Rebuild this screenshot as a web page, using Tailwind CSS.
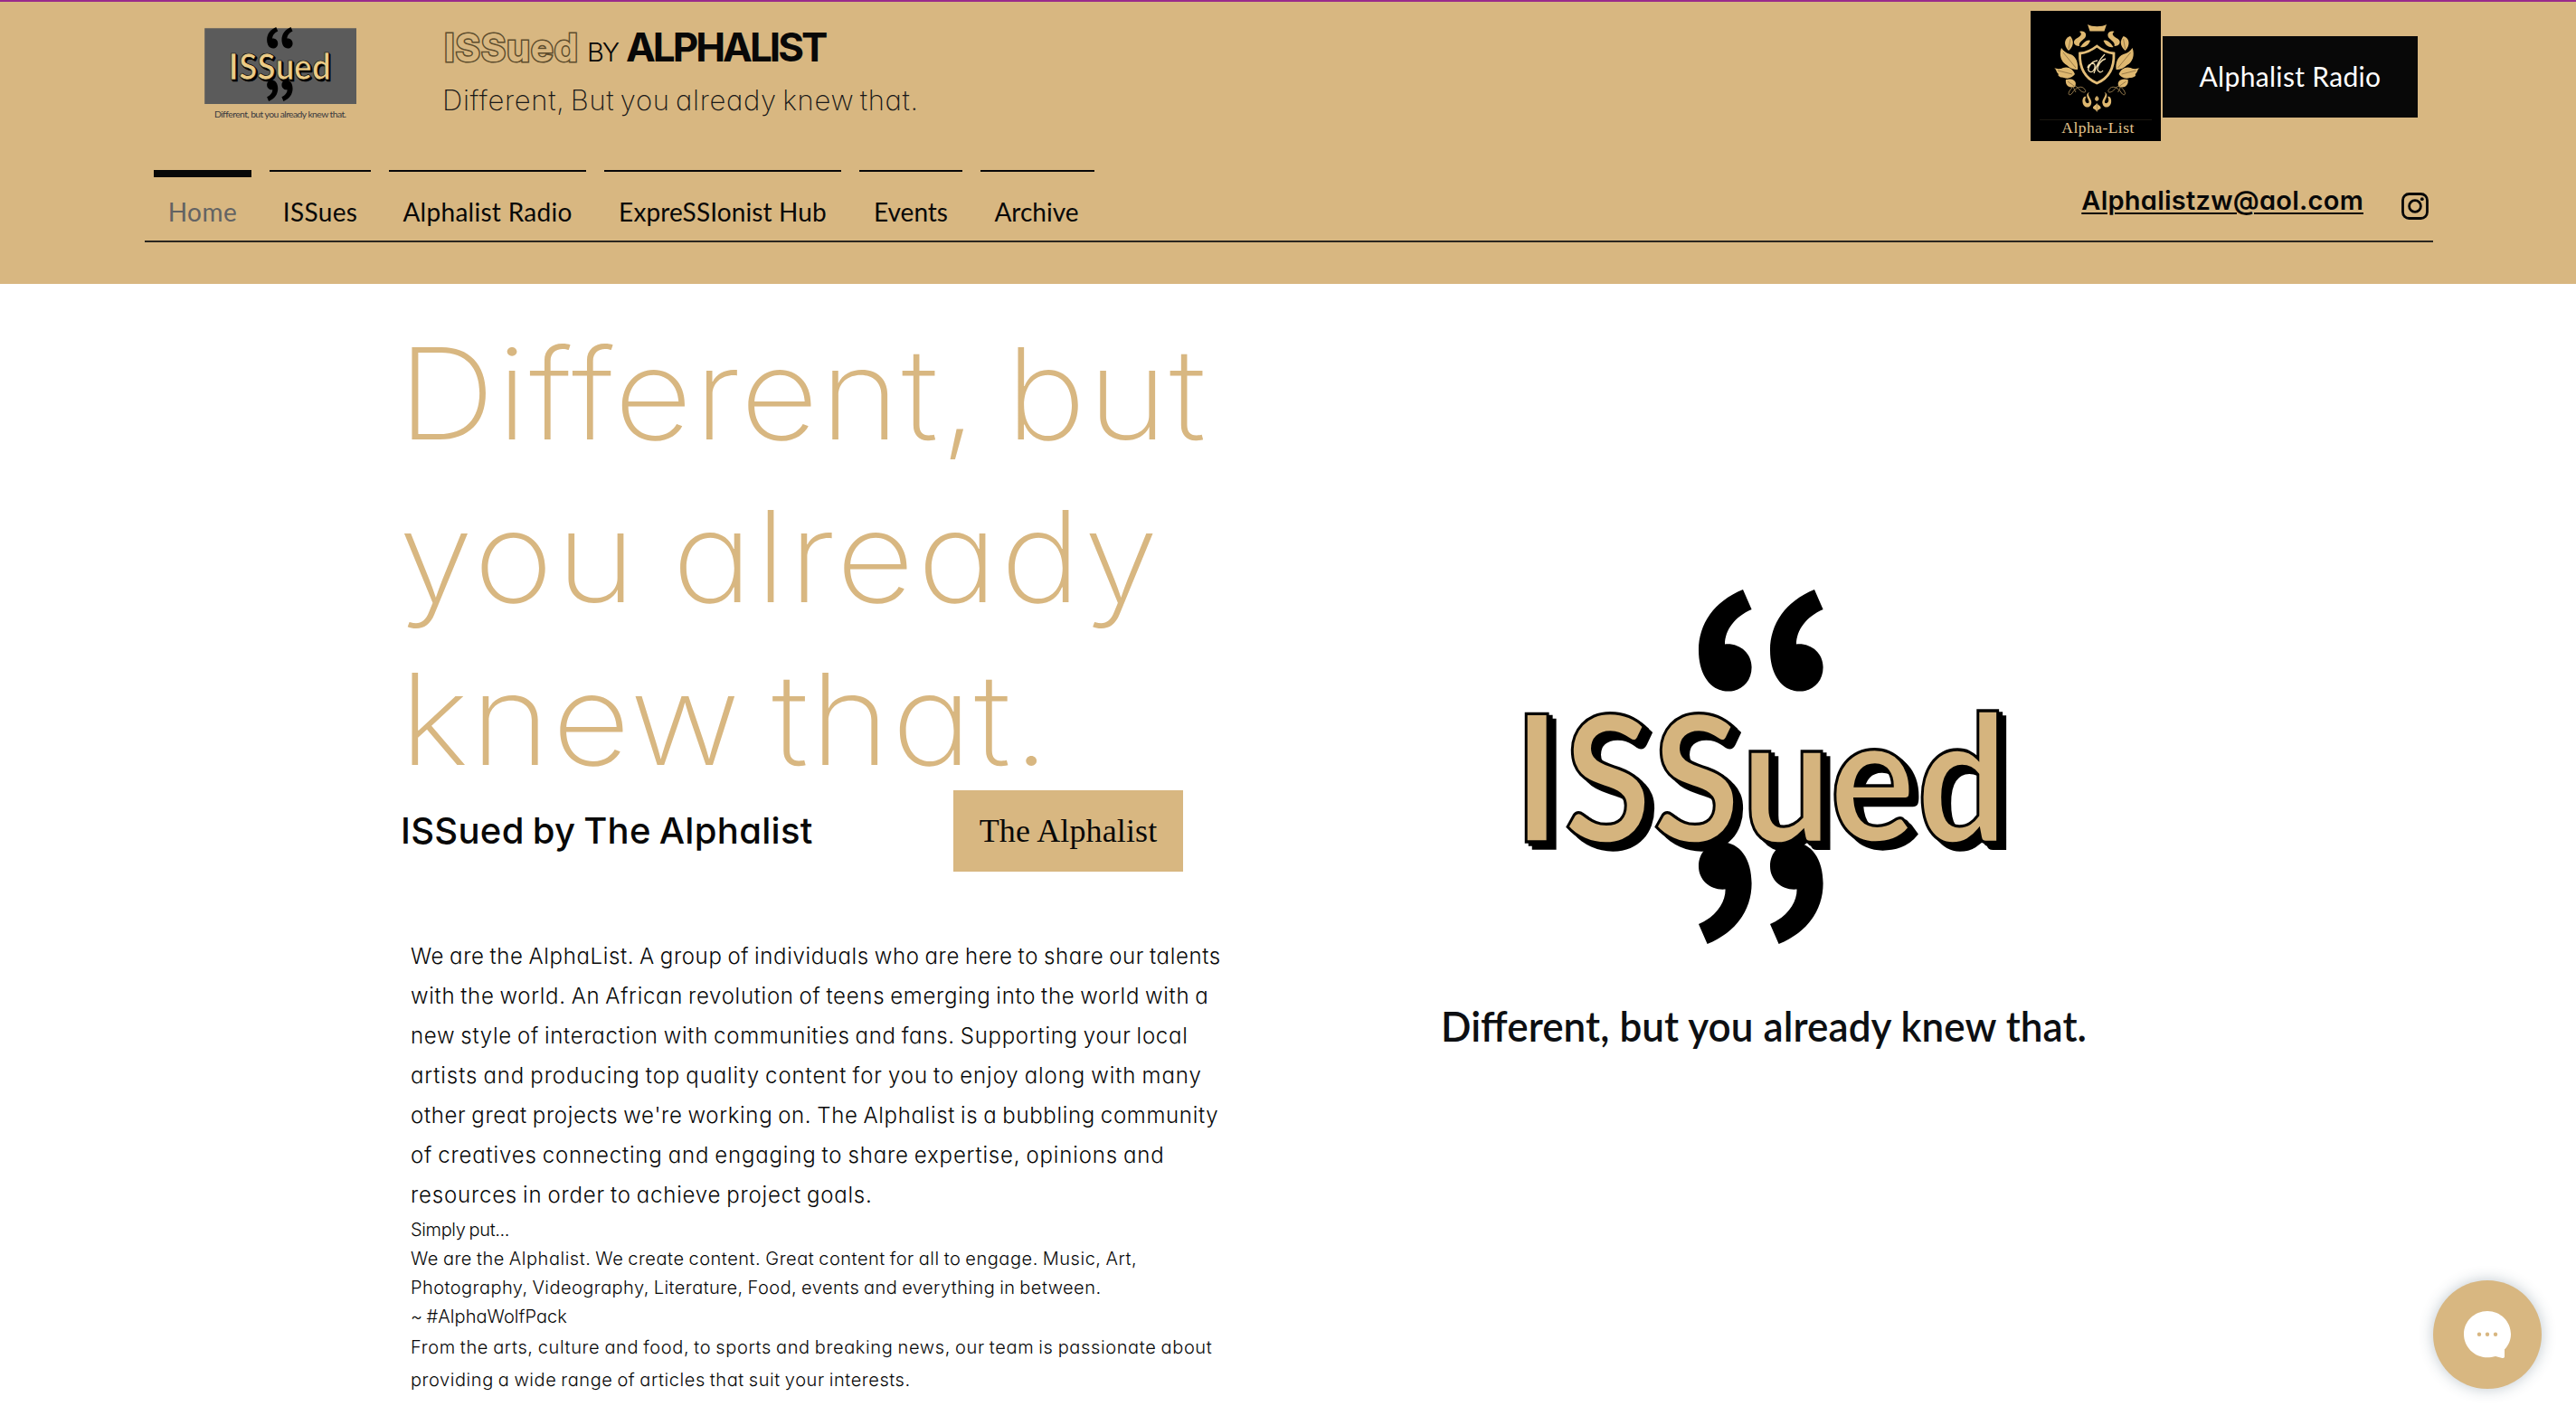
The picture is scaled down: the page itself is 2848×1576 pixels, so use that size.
<!DOCTYPE html>
<html lang="en">
<head>
<meta charset="utf-8">
<title>ISSued by Alphalist</title>
<script src="https://cdn.jsdelivr.net/npm/@tailwindcss/browser@4"></script>
</head>
<body class="relative h-[1576px] w-[2848px] overflow-hidden bg-white font-['Inter',sans-serif] text-[#080808] [font-feature-settings:'cv11']">

<!-- Shared artwork -->
<svg class="absolute size-0">
  <defs>
    <path id="quote" d="M49 0 L58.6 22 C40 30 29 45 29 60.5 C45 59 58.6 70 58.6 86 C58.6 102 47 112.6 33 112.6 C13 112.6 0 94 0 67 C0 38 17 13 49 0Z"/>
    <g id="wordmark" font-family="Lato, sans-serif" font-weight="700" font-size="177" stroke-linejoin="miter">
      <use href="#quote" x="191" y="0"/><use href="#quote" x="270" y="0"/>
      <use href="#quote" transform="translate(249.6 392) rotate(180)"/><use href="#quote" transform="translate(328.6 392) rotate(180)"/>
      <g fill="#000" stroke="#000" stroke-width="3">
        <text x="-6 50 148 246 344 440" transform="translate(0 286) scale(1 1.1)">ISSued</text>
        <text x="-10 46 144 242 340 436" transform="translate(0 282) scale(1 1.1)">ISSued</text>
      </g>
      <text x="-14 42 140 238 336 432" transform="translate(0 279) scale(1 1.1)" fill="currentColor" stroke="#000" stroke-width="3">ISSued</text>
    </g>
    <g id="crest-half">
      <path d="M44 28 C37 30 36 38 42 44 C48 39 48 33 44 28Z"/>
      <path d="M34 41 C31 49 34 57 40 60 C43 63 47 65 52 65 C53 57 50 50 44 48 C40 47 37 45 34 41Z"/>
      <path d="M26 63 C29 65 28 68 31 70 C29 72 33 74 37 74 C42 76 47 73 49 70 C47 64 41 61 36 63 C32 65 29 64 26 63Z"/>
      <path d="M39 76 C38 82 42 86 49 84 C52 78 47 74 39 76Z"/>
      <path d="M54 23 C60 21 63 26 60 30 C56 34 53 35 54 39 C48 39 46 34 50 31 C55 28 58 26 54 23Z"/>
      <path d="M66 33 C62 31 58 36 55 40 C60 41 64 38 66 33Z"/>
      <path d="M46 85 C39 92 43 95 46 91 C50 84 57 82 60 87 C63 91 57 91 54 87 C50 82 44 80 50 90" fill="none" stroke="#b3935c" stroke-width=".8"/>
      <path d="M65 90 C61 93 69 98 67 103 C65 109 58 107 57.500 101 C57 97 59 94 61.500 95 C59 99 61 103 64 102 C67 100 58 93 65 90Z"/>
      <path d="M73.300 94 C70 97 71 99 73.300 100Z M73.300 102 C71 106 69 104 69 108 C71 109 72 109 73.300 112Z"/>
    </g>
  </defs>
</svg>

<header class="h-[314px] border-t-2 border-[#992b8c] bg-[#d8b781]">
  <div class="flex h-[186px] items-start pl-[225px]">
    <svg class="mt-[18px] h-[116px] w-[170px] shrink-0 text-[#eccb86]" viewBox="225 20 170 116">
      <rect x="225.8" y="30.8" width="168.6" height="84.6" fill="#5b5b5b" stroke="#e3c187" stroke-width=".8"/>
      <use href="#wordmark" transform="translate(255.7 30) scale(.2065 .209)"/>
      <text x="237" y="130" font-family="Lato, sans-serif" font-size="10.4" fill="#3a3a40" textLength="146">Different, but you already knew that.</text>
    </svg>
    <div class="ml-[96px] w-[600px] whitespace-nowrap">
      <div class="mt-[21px] flex items-baseline text-[44px] leading-[59px]">
        <span class="w-[158px] text-[42px] font-bold tracking-[0.7px] text-[#d8b781] [-webkit-text-stroke:3px_#5c4c2d] [paint-order:stroke]">ISSued</span>
        <span class="w-[43px] text-[29px] font-light tracking-[-2px]">BY</span>
        <span class="font-bold tracking-[-3px]">ALPHALIST</span>
      </div>
      <p class="-mt-[3px] -ml-[2px] text-[31px] leading-[54px] font-extralight tracking-[0.68px] text-[#181818] [word-spacing:-3px]">Different, But you already knew that.</p>
    </div>
    <svg class="mt-[10px] ml-[1154px] h-36 w-36 shrink-0" viewBox="0 0 144 144">
      <rect width="144" height="144" fill="#000"/>
      <g fill="#dfb870">
        <path d="M63 15 C68 18 79 18 84 15 L81.500 22.500 H65.500Z"/>
        <use href="#crest-half"/>
        <use href="#crest-half" transform="translate(146.600 0) scale(-1 1)"/>
      </g>
      <g fill="none" stroke="#7d6136" stroke-width=".7">
        <path d="M44 31 L42 42 M36 46 L50 63 M30 66 L46 70 M41 78 L48 83 M102.600 31 L104.600 42 M110.600 46 L96.600 63 M116.600 66 L100.600 70 M105.600 78 L98.600 83"/>
      </g>
      <path d="M73.300 39 C67 44 61 46.500 54.500 47 C54 63 59 74 73.300 80 C87.600 74 92.600 63 92 47 C85.600 46.500 79.600 44 73.300 39Z" fill="#000" stroke="#e3bd78" stroke-width="2.800"/>
      <path d="M63 63 C64 58 70 57 71 60 C72 65 68 69 65 67 C62 65 66 56 74 55 M82 48 C76 54 73 60 70 69 M83 53 C78 54 74 60 74 65 C75 68 78 69 80 66" fill="none" stroke="#f0dcae" stroke-width="1.300"/>
      <path d="M10 120.500 H134" stroke="#1b1710" stroke-width="1"/>
      <text x="34.300" y="135.300" font-family="Liberation Serif, serif" font-size="17.500" fill="#e2c48d" textLength="80">Alpha-List</text>
    </svg>
    <div class="mt-[38px] ml-[2px] flex h-[90px] w-[282px] items-center justify-center bg-[#080808] pb-[2px] font-['Lato',sans-serif] text-[30px] tracking-[0.33px] text-white">Alphalist Radio</div>
  </div>

  <div class="mr-[158px] ml-[160px] flex h-20 justify-between border-b-2 border-[#2b2720] pl-[10px]">
    <nav class="flex gap-5 text-center font-['Lato',sans-serif] text-[28px] whitespace-nowrap">
      <a class="w-[108px]"><span class="mb-[5px] block h-2 bg-[#080808]"></span><span class="block leading-[66px] tracking-[0.5px] text-[#636363]">Home</span></a>
      <a class="w-[112px]"><span class="mb-[11px] block h-[2px] bg-[#080808]"></span><span class="block leading-[66px] tracking-[0.33px]">ISSues</span></a>
      <a class="w-[218px]"><span class="mb-[11px] block h-[2px] bg-[#080808]"></span><span class="block leading-[66px] tracking-[0.28px]">Alphalist Radio</span></a>
      <a class="w-[262px]"><span class="mb-[11px] block h-[2px] bg-[#080808]"></span><span class="block leading-[66px] tracking-[0.13px]">ExpreSSIonist Hub</span></a>
      <a class="w-[114px]"><span class="mb-[11px] block h-[2px] bg-[#080808]"></span><span class="block leading-[66px]">Events</span></a>
      <a class="w-[126px]"><span class="mb-[11px] block h-[2px] bg-[#080808]"></span><span class="-ml-[2px] block leading-[66px]">Archive</span></a>
    </nav>
    <div class="flex items-start gap-[42px] pr-[5px]">
      <a class="text-[29px] leading-[68px] font-semibold tracking-[0.25px] underline decoration-2 underline-offset-[3px]">Alphalistzw@aol.com</a>
      <svg class="mt-[25px] size-[30px]" viewBox="0 0 30 30" fill="none" stroke="#080808" stroke-width="2.800">
        <rect x="1.500" y="1.500" width="27" height="27" rx="7"/>
        <circle cx="15" cy="15" r="6.400"/>
        <circle cx="22.800" cy="7.200" r="1.900" fill="#080808" stroke="none"/>
      </svg>
    </div>
  </div>
</header>

<main class="flex pt-[31px] pl-[443px]">
  <section class="w-[1117px] whitespace-nowrap">
    <h1 class="origin-left scale-x-107 text-[140px] leading-[180px] font-extralight text-[#d8b781]">
      <span class="-ml-[3px] block tracking-[2px] [word-spacing:-14px]">Different, but</span>
      <span class="-ml-[2px] block tracking-[3.2px] [word-spacing:-8px]">you already</span>
      <span class="-ml-[1px] block tracking-[2.2px] [word-spacing:-11px]">knew that.</span>
    </h1>
    <div class="-mt-[11px] flex h-[90px] w-[865px] items-center justify-between">
      <h2 class="text-[40px] leading-[86px] font-medium tracking-[0.3px] [word-spacing:-2px]">ISSued by The Alphalist</h2>
      <a class="flex h-[90px] w-[254px] items-center justify-center bg-[#d8b781] font-['Liberation_Serif',serif] text-[36px] tracking-[0.13px]">The Alphalist</a>
    </div>
    <p class="mt-[72px] ml-[11px] text-[24px] leading-[44px] font-light [word-spacing:-1.5px]">
      <span class="block tracking-[0.643px]">We are the AlphaList. A group of individuals who are here to share our talents</span>
      <span class="block tracking-[0.7px]">with the world. An African revolution of teens emerging into the world with a</span>
      <span class="block tracking-[0.73px]">new style of interaction with communities and fans. Supporting your local</span>
      <span class="block tracking-[0.91px]">artists and producing top quality content for you to enjoy along with many</span>
      <span class="block tracking-[0.671px]">other great projects we're working on. The Alphalist is a bubbling community</span>
      <span class="block tracking-[0.83px]">of creatives connecting and engaging to share expertise, opinions and</span>
      <span class="block tracking-[0.8px]">resources in order to achieve project goals.</span>
    </p>
    <p class="ml-[11px] text-[20px] leading-[32px] font-light [word-spacing:-1.2px]">
      <span class="block tracking-[-0.36px]">Simply put...</span>
      <span class="block tracking-[0.53px]">We are the Alphalist. We create content. Great content for all to engage. Music, Art,</span>
      <span class="block tracking-[0.45px]">Photography, Videography, Literature, Food, events and everything in between.</span>
      <span class="block tracking-[0.05px]">~ #AlphaWolfPack</span>
    </p>
    <p class="ml-[11px] text-[20px] leading-[36px] font-light [word-spacing:-1.2px]">
      <span class="block tracking-[0.637px]">From the arts, culture and food, to sports and breaking news, our team is passionate about</span>
      <span class="block tracking-[0.57px]">providing a wide range of articles that suit your interests.</span>
    </p>
  </section>

  <svg class="mt-[275px] h-[560px] w-[780px] shrink-0 text-[#d5b47e]" viewBox="1560 620 780 560">
    <use href="#wordmark" x="1687" y="652"/>
    <text x="1593" transform="translate(0 1152) scale(1 1.04)" font-family="Lato, sans-serif" font-weight="600" font-size="44" fill="#0d0f12" textLength="714">Different, but you already knew that.</text>
  </svg>
</main>

<button class="absolute top-[1416px] left-[2690px] flex size-[120px] items-center justify-center rounded-full bg-[#d8b781] shadow-[0_0_16px_rgba(40,70,90,0.3)]">
  <svg class="size-[120px]" viewBox="0 0 120 120">
    <path d="M60 34 C74.500 34 86 45.500 86 59.500 C86 66 83.500 72 79 76.500 V84 C79 85.700 78 86.200 76.500 85.900 L69 84 C66 85 63 85.300 60 85.300 C45.500 85.300 34 73.500 34 59.500 C34 45.500 45.500 34 60 34Z" fill="#fff"/>
    <g fill="#d8b781"><circle cx="51" cy="59.700" r="2.200"/><circle cx="60" cy="59.700" r="2.200"/><circle cx="69" cy="59.700" r="2.200"/></g>
  </svg>
</button>
</body>
</html>
